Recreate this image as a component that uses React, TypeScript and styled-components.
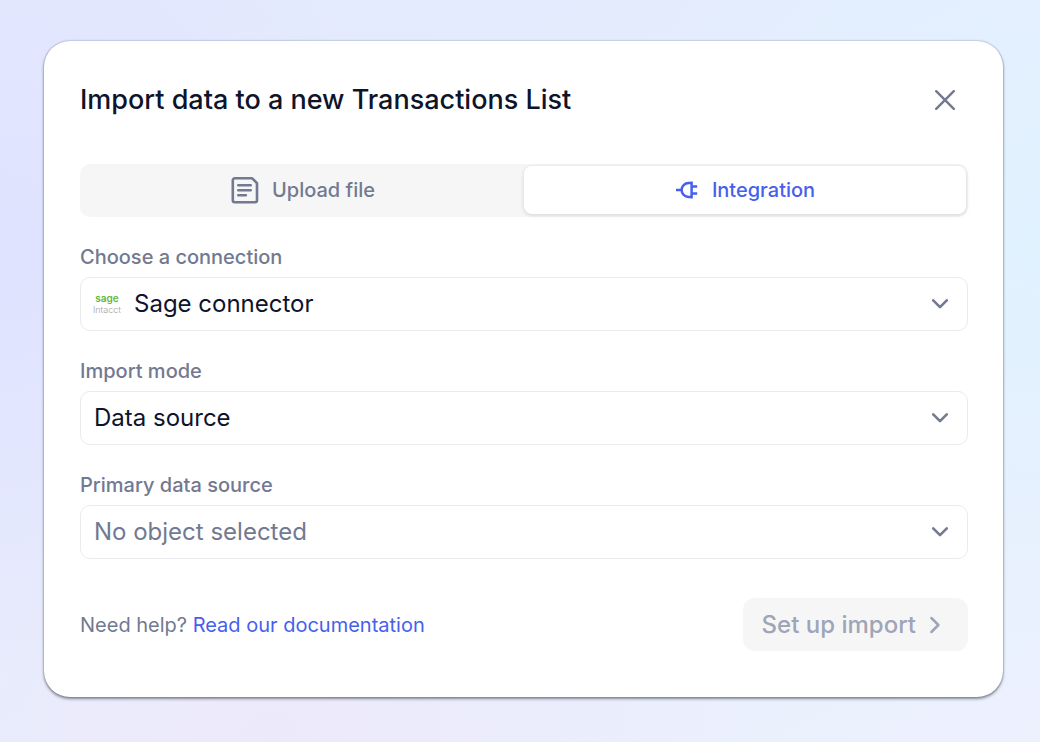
import React, { useState } from "react";
import styled, { createGlobalStyle } from "styled-components";

const GlobalStyle = createGlobalStyle`
  *, *::before, *::after { box-sizing: border-box; }
  body { margin: 0; }
  body, button, select { font-family: Inter, "Liberation Sans", sans-serif; }
`;

const color = {
  ink: "#0d142b",
  muted: "#727990",
  faint: "#9fa5b8",
  accent: "#465fee",
  fill: "#f6f6f6",
  line: "#ebebed",
};

const Backdrop = styled.div`
  min-height: 100vh;
  padding: 41px 37px 44px 44px;
  background:
    radial-gradient(circle at 100% 33%, #e1f2ff 0, rgba(225, 242, 255, 0) 40%),
    radial-gradient(circle at 0 34%, #dfe2ff 0, rgba(223, 226, 255, 0) 36%),
    radial-gradient(circle at 26% 100%, #ede9fa 0, rgba(237, 233, 250, 0) 44%),
    linear-gradient(150deg, #e4e9fd, #e5edfd 50%, #edf1fe);
`;

const Dialog = styled.form`
  padding: 36px 35px 46px 36px;
  border-radius: 26px;
  background: #fff;
  box-shadow:
    0 0 2px rgba(40, 46, 60, 0.45),
    0 2px 3px rgba(40, 46, 60, 0.5);
`;

const Header = styled.header`
  display: flex;
  align-items: center;
  justify-content: space-between;
  margin-bottom: 41px;
`;

const Title = styled.h1`
  margin: 0;
  font-size: 27px;
  line-height: 32px;
  font-weight: 500;
  color: ${color.ink};
`;

const CloseButton = styled.button`
  display: grid;
  place-items: center;
  width: 46px;
  height: 46px;
  padding: 0;
  border: 0;
  background: none;
  color: ${color.muted};
  cursor: pointer;
`;

const Tabs = styled.div`
  display: grid;
  grid-template-columns: 1fr 1fr;
  height: 53px;
  padding: 2px 2px 3px;
  border-radius: 10px;
  background: ${color.fill};
`;

const Tab = styled.button<{ $active: boolean }>`
  display: flex;
  align-items: center;
  justify-content: center;
  gap: 13px;
  padding: 0;
  border: 0;
  border-radius: 8px;
  font-size: 20px;
  line-height: 24px;
  font-weight: 500;
  color: ${(p) => (p.$active ? color.accent : color.muted)};
  background: ${(p) => (p.$active ? "#fff" : "transparent")};
  box-shadow: ${(p) => (p.$active ? "0 1px 4px rgba(0, 0, 0, 0.15)" : "none")};
  cursor: pointer;
`;

const Field = styled.div`
  display: flex;
  flex-direction: column;
  gap: 8px;
  margin-top: 28px;
`;

const Label = styled.label`
  font-size: 20px;
  line-height: 24px;
  font-weight: 500;
  color: ${color.muted};
`;

const SelectBox = styled.div`
  display: grid;
  grid-template-columns: 1fr;
  align-items: center;

  > * { grid-area: 1 / 1; }
`;

const Select = styled.select<{ $withLogo?: boolean; $placeholder?: boolean }>`
  appearance: none;
  width: 100%;
  height: 54px;
  padding: 0 48px 2px ${(p) => (p.$withLogo ? 53 : 13)}px;
  border: 1px solid ${color.line};
  border-radius: 10px;
  background: transparent;
  font-size: 24px;
  font-weight: 400;
  color: ${(p) => (p.$placeholder ? color.muted : color.ink)};
`;

const Chevron = styled.svg`
  justify-self: end;
  margin-right: 19px;
  pointer-events: none;
`;

const SageLogo = styled.span`
  display: flex;
  flex-direction: column;
  align-items: center;
  justify-self: start;
  width: 28px;
  margin-left: 13px;
  pointer-events: none;
`;

const SageName = styled.span`
  font-size: 10px;
  line-height: 12px;
  font-weight: 600;
  color: #62b73c;
`;

const SageProduct = styled.span`
  font-size: 9px;
  line-height: 12px;
  font-weight: 300;
  color: #a4a4a4;
`;

const Footer = styled.footer`
  display: flex;
  align-items: center;
  justify-content: space-between;
  margin-top: 39px;
`;

const Help = styled.p`
  margin: 0;
  font-size: 20px;
  line-height: 24px;
  color: ${color.muted};
`;

const DocsLink = styled.a`
  color: ${color.accent};
  text-decoration: none;
`;

const Submit = styled.button`
  display: flex;
  align-items: center;
  gap: 13px;
  height: 53px;
  padding: 0 27px 0 19px;
  border: 0;
  border-radius: 12px;
  background: ${color.fill};
  font-size: 24px;
  line-height: 28px;
  font-weight: 500;
  color: ${color.faint};
`;

const strokes = {
  fill: "none",
  stroke: "currentColor",
  strokeLinecap: "round",
  strokeLinejoin: "round",
} as const;

const CloseIcon = () => (
  <svg width="20" height="20" viewBox="0 0 20 20" strokeWidth="2.4" {...strokes} aria-hidden>
    <path d="M1.2 1.2l17.6 17.6M18.8 1.2L1.2 18.8" />
  </svg>
);

const FileIcon = () => (
  <svg width="28" height="28" viewBox="0 0 28 28" strokeWidth="2.6" {...strokes} aria-hidden>
    <path d="M3.8 2.3h17.4l4.8 4.8v17.1a2 2 0 0 1-2 2H3.8a2 2 0 0 1-2-2V4.3a2 2 0 0 1 2-2z" />
    <path d="M7.3 9.2h12.4M7.3 14.2h12.4M7.3 19.2h7.6" />
  </svg>
);

const PlugIcon = () => (
  <svg width="24" height="20" viewBox="0 0 24 20" strokeWidth="2.5" {...strokes} strokeLinecap="butt" aria-hidden>
    <path d="M1 10h6M16.6 1.6v16.8M16.6 3h-3a7 7 0 0 0 0 14h3M16.6 6.6h5.6M16.6 13.4h5.6" />
  </svg>
);

const ChevronDown = () => (
  <Chevron width="18" height="12" viewBox="0 0 18 12" strokeWidth="2.6" {...strokes} stroke={color.muted} aria-hidden>
    <path d="M2.2 2.4L9 9.2l6.8-6.8" />
  </Chevron>
);

const ChevronRight = () => (
  <svg width="12" height="18" viewBox="0 0 12 18" strokeWidth="2.5" {...strokes} aria-hidden>
    <path d="M2.4 2L9.4 9l-7 7" />
  </svg>
);

export default function App() {
  const [tab, setTab] = useState<"file" | "integration">("integration");

  return (
    <>
      <GlobalStyle />
      <Backdrop>
        <Dialog aria-labelledby="title" onSubmit={(e) => e.preventDefault()}>
          <Header>
            <Title id="title">Import data to a new Transactions List</Title>
            <CloseButton type="button" aria-label="Close">
              <CloseIcon />
            </CloseButton>
          </Header>

          <Tabs role="tablist">
            <Tab type="button" role="tab" aria-selected={tab === "file"} $active={tab === "file"} onClick={() => setTab("file")}>
              <FileIcon />
              Upload file
            </Tab>
            <Tab type="button" role="tab" aria-selected={tab === "integration"} $active={tab === "integration"} onClick={() => setTab("integration")}>
              <PlugIcon />
              Integration
            </Tab>
          </Tabs>

          <Field>
            <Label htmlFor="connection">Choose a connection</Label>
            <SelectBox>
              <Select id="connection" $withLogo>
                <option>Sage connector</option>
              </Select>
              <SageLogo aria-hidden>
                <SageName>sage</SageName>
                <SageProduct>Intacct</SageProduct>
              </SageLogo>
              <ChevronDown />
            </SelectBox>
          </Field>

          <Field>
            <Label htmlFor="mode">Import mode</Label>
            <SelectBox>
              <Select id="mode">
                <option>Data source</option>
              </Select>
              <ChevronDown />
            </SelectBox>
          </Field>

          <Field>
            <Label htmlFor="source">Primary data source</Label>
            <SelectBox>
              <Select id="source" $placeholder>
                <option>No object selected</option>
              </Select>
              <ChevronDown />
            </SelectBox>
          </Field>

          <Footer>
            <Help>
              Need help? <DocsLink href="#documentation">Read our documentation</DocsLink>
            </Help>
            <Submit type="submit" disabled>
              Set up import
              <ChevronRight />
            </Submit>
          </Footer>
        </Dialog>
      </Backdrop>
    </>
  );
}
